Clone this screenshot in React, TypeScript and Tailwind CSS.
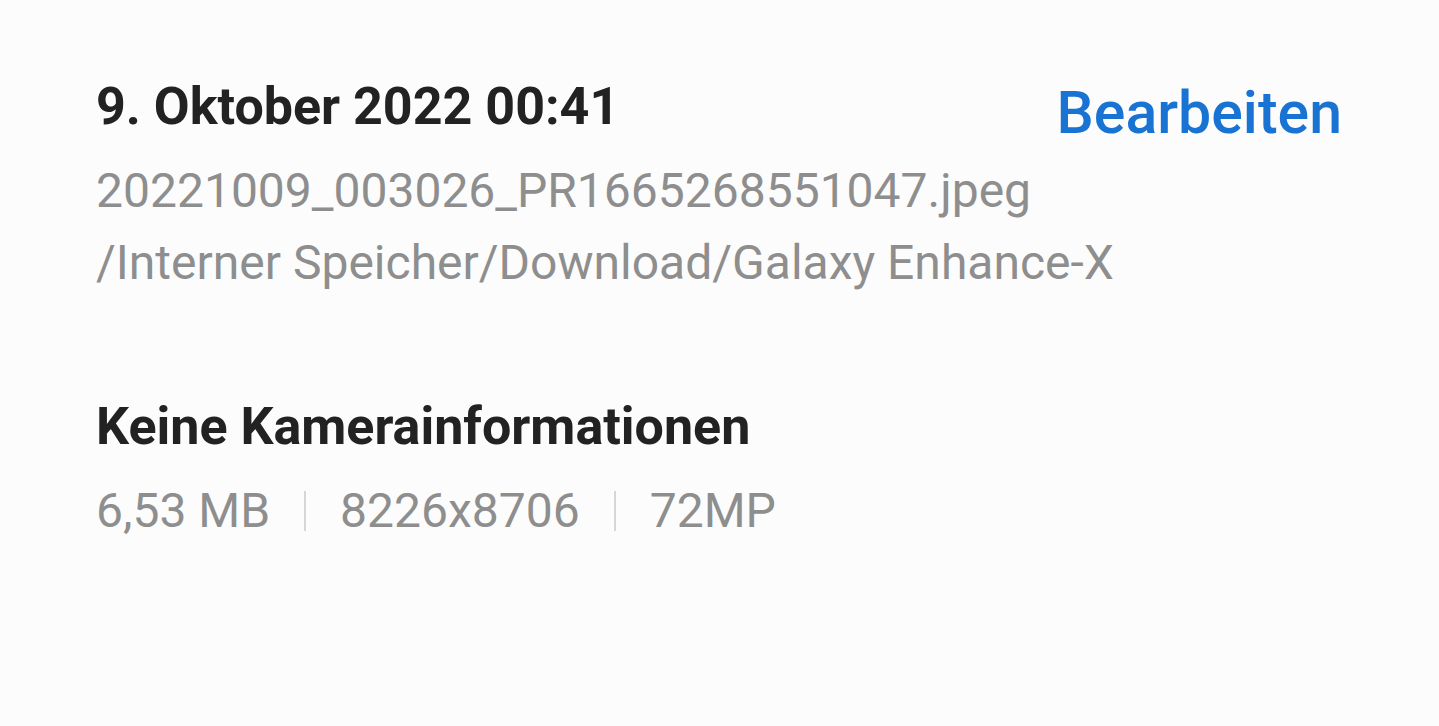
const font = { fontFamily: "Roboto, 'Noto Sans', sans-serif" };

function Separator() {
  return <span className="mx-[34px] h-[40px] w-[2px] self-center bg-[#d6d6d6]" />;
}

export default function App() {
  return (
    <div
      className="min-h-[726px] w-full overflow-hidden bg-[#fcfcfc] pl-[96px] pr-[97px] pt-[77px]"
      style={font}
    >
      {/* file info */}
      <div className="flex flex-col">
        <div className="flex h-[60px] items-start justify-between">
          <h1 className="text-[52px] font-bold leading-[60px] text-[#222222]">
            9. Oktober 2022 00:41
          </h1>
          <button className="mt-[6px] shrink-0 text-[59px] font-medium leading-[60px] text-[#1873d3]">
            Bearbeiten
          </button>
        </div>
        <div className="mt-[18px] whitespace-nowrap text-[48px] leading-[72px] text-[#8e8e8e]">
          <p>20221009_003026_PR1665268551047.jpeg</p>
          <p>/Interner Speicher/Download/Galaxy Enhance-X</p>
        </div>
      </div>

      {/* camera info */}
      <div className="mt-[98px] flex flex-col">
        <h2 className="text-[52px] font-bold leading-[60px] text-[#222222]">
          Keine Kamerainformationen
        </h2>
        <div className="mt-[18px] flex items-center whitespace-nowrap text-[48px] leading-[72px] text-[#8e8e8e]">
          <span>6,53 MB</span>
          <Separator />
          <span>8226x8706</span>
          <Separator />
          <span>72MP</span>
        </div>
      </div>
    </div>
  );
}
